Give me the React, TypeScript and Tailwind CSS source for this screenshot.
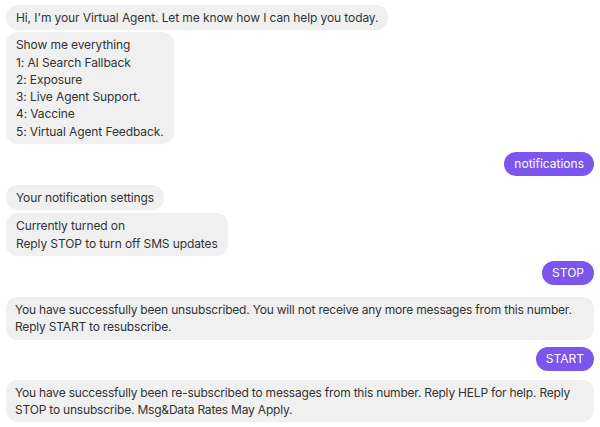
import React from 'react';

const Bot = ({ children, className = '' }: { children: React.ReactNode; className?: string }) => (
  <div className={`self-start bg-[#f0f0f0] text-[#333333] rounded-[12px] px-[10px] py-[4px] text-[12px] leading-[17.3px] tracking-[-0.1px] whitespace-nowrap ${className}`}>
    {children}
  </div>
);

const User = ({ children, className = '' }: { children: React.ReactNode; className?: string }) => (
  <div className={`self-end bg-[#7b55ec] text-white rounded-full px-[10px] py-[4px] text-[12px] leading-[16px] ${className}`}>
    {children}
  </div>
);

export default function App() {
  return (
    <div
      className="w-[600px] h-[427px] bg-white flex flex-col px-[6px] pt-[5px] overflow-hidden"
      style={{ fontFamily: 'Inter, "Liberation Sans", sans-serif' }}
    >
      <Bot>Hi, I'm your Virtual Agent. Let me know how I can help you today.</Bot>
      <Bot className="mt-[2px]">
        Show me everything
        <br />1: AI Search Fallback
        <br />2: Exposure
        <br />3: Live Agent Support.
        <br />4: Vaccine
        <br />5: Virtual Agent Feedback.
      </Bot>
      <User className="mt-[8px]">notifications</User>
      <Bot className="mt-[9px]">Your notification settings</Bot>
      <Bot className="mt-[3px]">
        Currently turned on
        <br />Reply STOP to turn off SMS updates
      </Bot>
      <User className="mt-[5px]">STOP</User>
      <Bot className="mt-[12px] w-full !px-[9px] tracking-[-0.2px]">
        You have successfully been unsubscribed. You will not receive any more messages from this number.
        <br />
        Reply START to resubscribe.
      </Bot>
      <User className="mt-[7px]">START</User>
      <Bot className="mt-[9px] w-full !px-[9px] tracking-[-0.2px]">
        You have successfully been re-subscribed to messages from this number. Reply HELP for help. Reply
        <br />
        STOP to unsubscribe. Msg&amp;Data Rates May Apply.
      </Bot>
    </div>
  );
}
